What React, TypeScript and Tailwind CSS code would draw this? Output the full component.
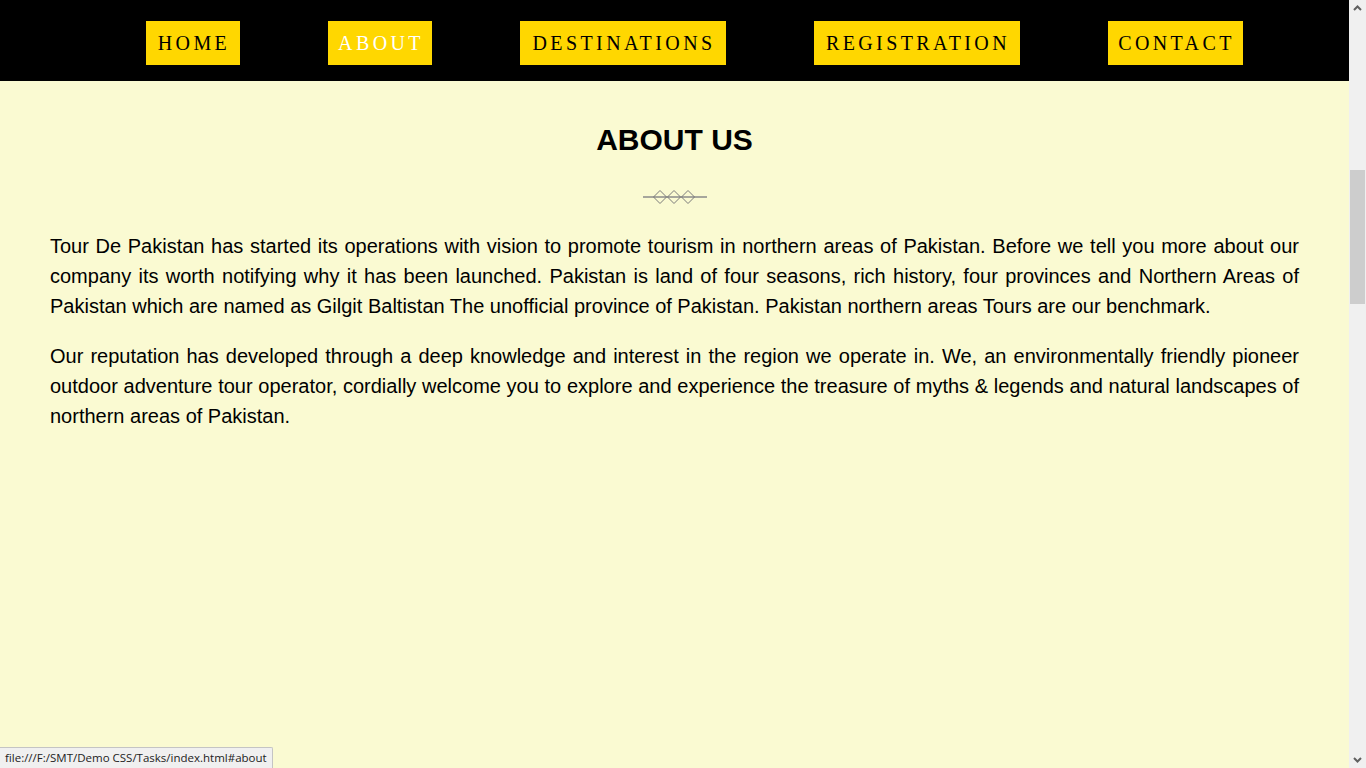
// App.tsx — "About us" page of Tour De Pakistan, with the browser chrome bits
const navItems = [
  { label: 'HOME', w: 'w-[94px]', active: false },
  { label: 'ABOUT', w: 'w-[104px]', active: true },
  { label: 'DESTINATIONS', w: 'w-[206px]', active: false },
  { label: 'REGISTRATION', w: 'w-[206px]', active: false },
  { label: 'CONTACT', w: 'w-[135px]', active: false },
];

function Divider() {
  // thin line with three small diamonds strung on it
  return (
    <svg width="64" height="16" viewBox="0 0 64 16" className="block mx-auto">
      <line x1="0" y1="8" x2="64" y2="8" stroke="#8a8a8a" strokeWidth="1.3" />
      {[17, 31, 45].map((cx) => (
        <path
          key={cx}
          d={`M ${cx} 1.5 L ${cx + 6.5} 8 L ${cx} 14.5 L ${cx - 6.5} 8 Z`}
          fill="none"
          stroke="#7a7a7a"
          strokeWidth="1"
        />
      ))}
    </svg>
  );
}

function Scrollbar() {
  return (
    <div className="relative w-[17px] h-full bg-[#f0f0f0] shrink-0">
      <svg width="17" height="17" viewBox="0 0 17 17" className="absolute top-0 left-0">
        <path d="M 5 10 L 8.5 6.5 L 12 10" fill="none" stroke="#606060" strokeWidth="2" />
      </svg>
      <div className="absolute left-[1px] top-[170px] w-[15px] h-[134px] bg-[#cdcdcd]" />
      <svg width="17" height="17" viewBox="0 0 17 17" className="absolute bottom-0 left-0">
        <path d="M 5 7 L 8.5 10.5 L 12 7" fill="none" stroke="#606060" strokeWidth="2" />
      </svg>
    </div>
  );
}

export default function App() {
  return (
    <div className="relative flex w-full h-[768px] overflow-hidden bg-[#fafad2]">
      <div className="w-[1349px] shrink-0 h-full">
        {/* Top nav */}
        <nav className="h-[81px] bg-black flex items-start pt-[21px] pl-[146px] gap-[88px]">
          {navItems.map((n) => (
            <a
              key={n.label}
              href="#"
              className={`${n.w} h-[44px] bg-[#ffd700] flex items-center justify-center text-[20px] tracking-[3.4px] pl-[2px] ${
                n.active ? 'text-white' : 'text-black'
              }`}
              style={{ fontFamily: '"Liberation Serif", "DejaVu Serif", serif' }}
            >
              {n.label}
            </a>
          ))}
        </nav>

        {/* About section */}
        <section style={{ fontFamily: '"Liberation Sans", Arial, sans-serif' }}>
          <h1 className="mt-[42px] text-center text-[30px] leading-[34px] font-bold text-black">ABOUT US</h1>
          <div className="mt-[32px]">
            <Divider />
          </div>
          <div className="mt-[26px] px-[50px] text-[20px] leading-[30px] text-black text-justify">
            <p className="mb-[20px]">
              Tour De Pakistan has started its operations with vision to promote tourism in northern areas of
              Pakistan. Before we tell you more about our company its worth notifying why it has been launched.
              Pakistan is land of four seasons, rich history, four provinces and Northern Areas of Pakistan which
              are named as Gilgit Baltistan The unofficial province of Pakistan. Pakistan northern areas Tours are
              our benchmark.
            </p>
            <p>
              Our reputation has developed through a deep knowledge and interest in the region we operate in. We,
              an environmentally friendly pioneer outdoor adventure tour operator, cordially welcome you to explore
              and experience the treasure of myths &amp; legends and natural landscapes of northern areas of
              Pakistan.
            </p>
          </div>
        </section>
      </div>

      <Scrollbar />

      {/* Browser status bubble */}
      <div
        className="absolute left-0 bottom-0 h-[21px] px-[5px] flex items-center bg-[#f0f0f0] border border-[#c4c4c4] border-l-0 border-b-0 rounded-tr-[2px] text-[11.5px] text-[#222]"
        style={{ fontFamily: '"Open Sans", "DejaVu Sans", sans-serif' }}
      >
        file:///F:/SMT/Demo CSS/Tasks/index.html#about
      </div>
    </div>
  );
}
